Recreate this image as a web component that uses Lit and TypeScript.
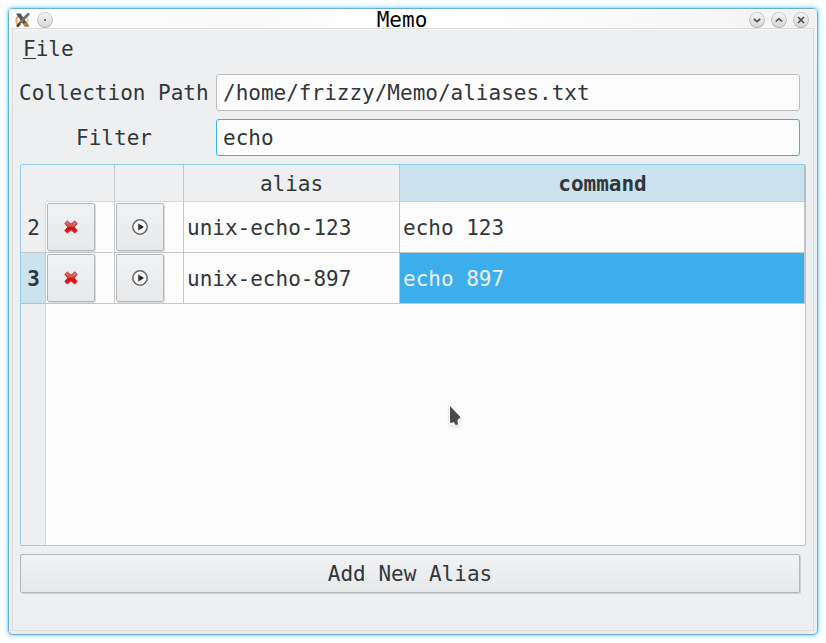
import { LitElement, html, css, svg } from "lit";
import { customElement, property } from "lit/decorators.js";

const cross = html`<svg class="ic" width="14" height="14" viewBox="0 0 14 14">
  <defs><linearGradient id="r" x1="0" y1="0" x2="0" y2="1">
    <stop offset="0" stop-color="#dc8480" /><stop offset=".45" stop-color="#cf4f4a" />
    <stop offset=".55" stop-color="#d80d0d" /><stop offset="1" stop-color="#f41818" />
  </linearGradient></defs>
  <path d="M3.3 1L7 4.2L10.7 1L13.2 3.4L10.2 7L13.2 10.6L10.7 13L7 9.8L3.3 13L.8 10.6L3.8 7L.8 3.4Z"
    fill="url(#r)" stroke="#b52222" stroke-width=".9" stroke-linejoin="round" />
</svg>`;

const play = html`<svg class="ic" width="18" height="18" viewBox="0 0 18 18">
  <defs><linearGradient id="p" x1="0" y1="0" x2="1" y2="0">
    <stop offset="0" stop-color="#666" /><stop offset=".6" stop-color="#111" />
  </linearGradient></defs>
  <circle cx="9" cy="9" r="7.2" fill="#fbfbfb" stroke="#646464" stroke-width="1.5" />
  <path d="M7 5.2L12.9 9L7 12.8Z" fill="url(#p)" />
</svg>`;

const glyphs = {
  dot: svg`<circle cx="8" cy="8" r="1" fill="#444" stroke="none" />`,
  down: svg`<path d="M4.8 6.8L8 9.6L11.2 6.8" />`,
  up: svg`<path d="M4.8 9.5L8 6.7L11.2 9.5" />`,
  close: svg`<path d="M5 5L11 11M11 5L5 11" />`,
};

@customElement("title-button")
class TitleButton extends LitElement {
  @property() kind: keyof typeof glyphs = "dot";
  static styles = css`
    :host { display: block; width: 16px; height: 16px; }
    svg { display: block; overflow: visible; }
    .g { fill: none; stroke: #484848; stroke-width: 1.6; }
  `;
  render() {
    return html`<svg width="16" height="16" viewBox="0 0 16 16">
      <defs><linearGradient id="b" x1="0" y1="0" x2="0" y2="1">
        <stop offset="0" stop-color="#f6f6f6" /><stop offset="1" stop-color="#d6d6d6" />
      </linearGradient></defs>
      <circle cx="8" cy="8.2" r="7.7" fill="#acacac" />
      <circle cx="8" cy="7.8" r="7.4" fill="url(#b)" stroke="#c2c2c2" stroke-width=".7" />
      <g class="g">${glyphs[this.kind]}</g>
    </svg>`;
  }
}

@customElement("app-root")
class AppRoot extends LitElement {
  rows = [
    { n: 2, alias: "unix-echo-123", command: "echo 123", current: false },
    { n: 3, alias: "unix-echo-897", command: "echo 897", current: true },
  ];

  static styles = css`
    :host {
      display: block; position: relative; box-sizing: border-box;
      width: 826px; height: 643px; padding: 8px; overflow: hidden;
      background: #fff; color: #31363b;
      font: 21px/25px "DejaVu Sans Mono", monospace;
    }
    * { box-sizing: border-box; }
    .window {
      width: 810px; height: 627px; border: 1px solid #68aedb; border-radius: 5px;
      display: flex; flex-direction: column; padding: 0 3px 3px;
      background: linear-gradient(#fcfcfc, #f4f4f4 22px, #eeeeef 110px, #eeeeef);
      box-shadow: 0 0 2px 1px #a5dcff, 0 0 5px 2px #d2efff;
    }
    .title {
      height: 19px; flex: none; display: grid; grid-template-columns: 44px 1fr 66px;
      align-items: center; color: #000; margin: 0 -3px; padding: 0 8px 0 6px;
      background: linear-gradient(100deg, #fdfdfd 0, #f9f9f9 30%, #fff 45%, #fff 55%, #f8f8f8 80%, #f3f3f3);
      border-radius: 4px 4px 0 0;
    }
    .title .l, .title .r { display: flex; align-items: center; }
    .title .l { gap: 6px; }
    .title .r { gap: 6px; justify-content: flex-end; }
    .title .t { text-align: center; line-height: 19px; padding: 2px 0 0 2px; }
    .title svg { display: block; }
    .body {
      flex: 1; border: 1px solid #d9dadb; border-bottom-color: #dcddde; background: #eeeff0;
      display: flex; flex-direction: column; padding: 0 7px;
      box-shadow: inset 0 1px #f8f8f8;
    }
    .menu { height: 45px; padding: 8px 3px 0; flex: none; }
    .menu u { text-decoration: none; display: inline-block; height: 22px; border-bottom: 1px solid #31363b; line-height: 25px; vertical-align: top; }
    .field { display: grid; grid-template-columns: 189px 584px; grid-template-rows: 37px; column-gap: 8px; height: 37px; margin: 0 0 8px -1px; flex: none; }
    .field label { text-align: center; line-height: 39px; white-space: nowrap; }
    .field label.f { padding-left: 1px; }
    .box { height: 37px; border: 1px solid #bcbdbf; border-radius: 3px; background: #fcfcfc; padding: 0 6px; line-height: 37px; }
    .box.on { border-color: #3daee9; }
    .table {
      width: 786px; height: 382px; flex: none; border: 1px solid #93cee9; border-radius: 2px;
      background: #fcfcfc; display: grid; overflow: hidden;
      grid-template-columns: 25px 69px 69px 216px 405px; grid-template-rows: 37px 51px 51px 241px;
    }
    .h { background: #eeeff0; border-right: 1px solid #c5c6c8; border-bottom: 1px solid #d6d7d9; text-align: center; line-height: 39px; }
    .h.corner { border: 0; }
    .h.cur { background: #cbe3ef; font-weight: bold; border-right-color: #a6bfcb; border-bottom-color: #b9cfe0; padding-left: 1px; }
    .n { background: #eeeff0; border-right: 1px solid #d6d7d9; border-bottom: 1px solid #c5c6c8; text-align: center; line-height: 53px; padding-left: 1px; }
    .n.cur { background: #cbe3ef; font-weight: bold; border-right-color: #b9cfe0; border-bottom-color: #a9c4d6; }
    .c { border-right: 1px solid #c5c6c8; border-bottom: 1px solid #c5c6c8; padding-left: 3px; line-height: 53px; }
    .c.sel { background: #3daeec; color: #eff0f1; }
    .c.act { padding: 1px 0 0 1px; }
    .rest { background: #eeeff0; border-right: 1px solid #d6d7d9; }
    .btn {
      border: 1px solid #b4b6b8; border-radius: 2px; box-shadow: 1px 1px 0 rgba(0,0,0,.13);
      background: linear-gradient(#f1f2f3, #e7e8e9); display: flex; align-items: center; justify-content: center;
    }
    .act .btn { width: 48px; height: 48px; }
    .ic { display: block; }
    .add { width: 780px; height: 39px; margin-top: 8px; flex: none; padding-top: 2px; }
    .pointer { position: absolute; left: 446px; top: 402px; filter: drop-shadow(0 1px 1px rgba(0,0,0,.2)); }
  `;

  render() {
    return html`
      <div class="window">
        <div class="title">
          <div class="l">
            <svg width="16" height="16" viewBox="0 0 16 16">
              <path d="M3.5 4Q-.5 8 2.6 12.5" fill="none" stroke="#f79a55" stroke-width="1.8" />
              <path d="M5 7.5Q7 5.5 9.5 6" fill="none" stroke="#ffc04a" stroke-width="1.8" />
              <path d="M12 5Q14 8 12.5 11" fill="none" stroke="#ffd0a0" stroke-width="1.6" />
              <path d="M1 1.5H5.6L14.4 14.5H9.8Z" fill="#555" />
              <path d="M10.5 10.5L14 14.5H10L8.2 12Z" fill="#b98a22" />
              <path d="M14 1.5L8 7.5L2.4 14" fill="none" stroke="#707070" stroke-width="2.6" />
              <path d="M5 11.5L2 14.6" stroke="#57451c" stroke-width="2.4" />
            </svg>
            <title-button kind="dot"></title-button>
          </div>
          <div class="t">Memo</div>
          <div class="r">
            <title-button kind="down"></title-button>
            <title-button kind="up"></title-button>
            <title-button kind="close"></title-button>
          </div>
        </div>
        <div class="body">
          <div class="menu"><u>F</u>ile</div>
          <div class="field"><label>Collection Path</label><div class="box">/home/frizzy/Memo/aliases.txt</div></div>
          <div class="field"><label class="f">Filter</label><div class="box on">echo</div></div>
          <div class="table">
            <div class="h corner"></div><div class="h"></div><div class="h"></div>
            <div class="h">alias</div><div class="h cur">command</div>
            ${this.rows.map((r) => html`
              <div class="n ${r.current ? "cur" : ""}">${r.n}</div>
              <div class="c act"><div class="btn">${cross}</div></div>
              <div class="c act"><div class="btn">${play}</div></div>
              <div class="c">${r.alias}</div>
              <div class="c ${r.current ? "sel" : ""}">${r.command}</div>`)}
            <div class="rest"></div>
          </div>
          <div class="btn add">Add New Alias</div>
        </div>
      </div>
      <svg class="pointer" width="18" height="26" viewBox="0 0 18 26">
        <path d="M4 4L14.6 15L11.5 18.2L12 22.5L8.5 23L4 21.5Z" fill="none" stroke="#fff" stroke-width="2" />
        <path d="M4 4L14.6 15.3L11.5 18L12 22.5L9.5 23L8 20L4 21Z" fill="#4a4a4a" />
      </svg>`;
  }
}
